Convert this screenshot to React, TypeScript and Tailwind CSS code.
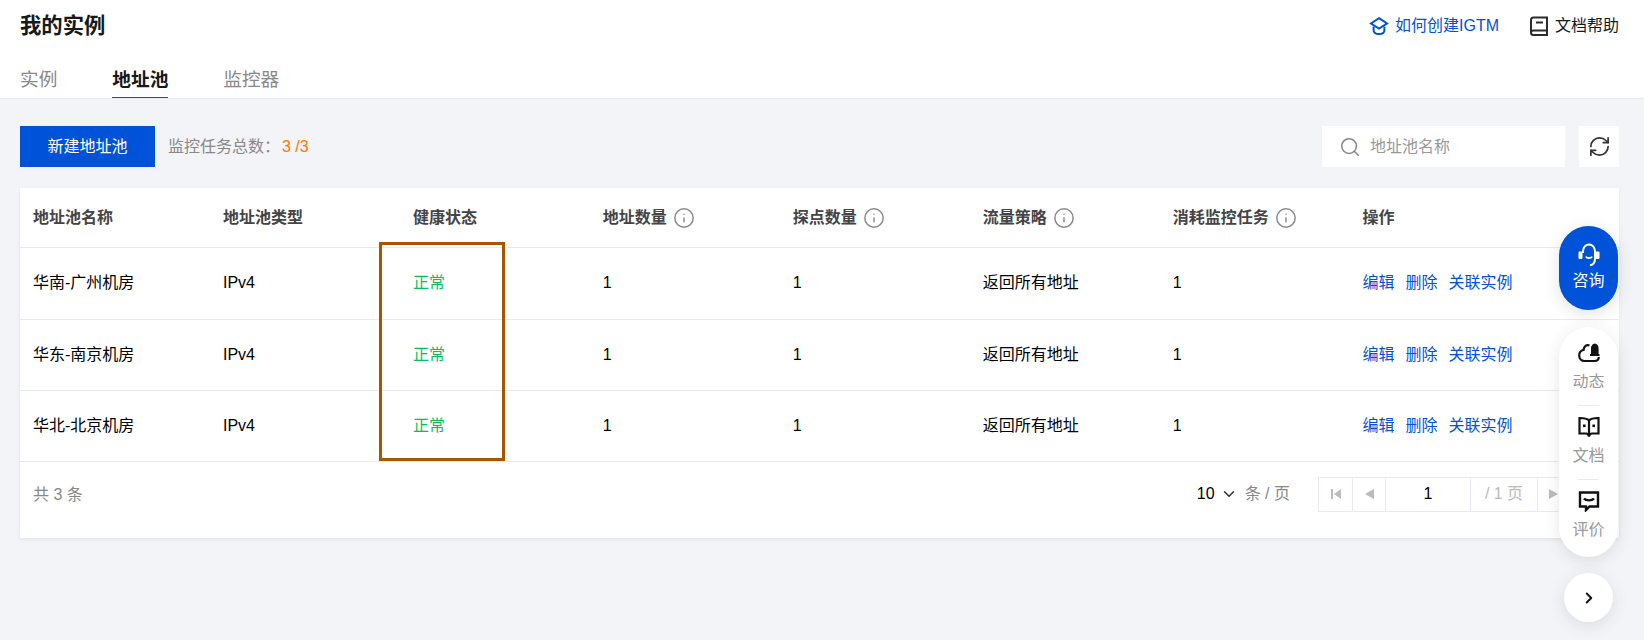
import React from "react";
import { Search, RefreshCw, ChevronDown, ChevronRight, Info } from "lucide-react";

const heads = ["地址池名称", "地址池类型", "健康状态", "地址数量", "探点数量", "流量策略", "消耗监控任务", "操作"];
const withInfo = [3, 4, 5, 6];
const rows = [
  { name: "华南-广州机房", h: "h-[72px]" },
  { name: "华东-南京机房", h: "h-[71px]" },
  { name: "华北-北京机房", h: "h-[71px]" },
];

function CapIcon() {
  return (
    <svg width="20" height="20" viewBox="0 0 20 20" fill="none" stroke="#0052d9" strokeWidth="2">
      <path d="M10 2.2 18 7.5 10 12.6 2 7.5Z" strokeLinejoin="miter" />
      <path d="M4.6 10.5V14.2C4.6 16.8 7 18 10 18S15.4 16.8 15.4 14.2V10.5" />
    </svg>
  );
}
function BookIcon() {
  return (
    <svg width="18" height="20" viewBox="0 0 18 20" fill="none" stroke="#2b2b2b" strokeWidth="2">
      <path d="M17 14.5V1.5H3.5C2 1.5 1 2.5 1 4V16.5C1 18 2 19 3.5 19H17V14.5H3.5C2 14.5 1 15.5 1 16.5" />
      <path d="M6 6.5H13" />
    </svg>
  );
}
function HeadsetIcon() {
  return (
    <svg width="24" height="24" viewBox="0 0 24 24" fill="none" stroke="#fff" strokeWidth="2">
      <path d="M6 10V8.5C6 4.4 8.7 1.5 12 1.5S18 4.4 18 8.5V15.5C18 19.5 16.5 21.7 13 22.2" />
      <rect x="1.5" y="8.5" width="4" height="7.5" rx="1" fill="#fff" stroke="none" />
      <rect x="18.5" y="8.5" width="4" height="7.5" rx="1" fill="#fff" stroke="none" />
      <path d="M9 13.5C9.8 15.6 14.2 15.6 15 13.5" />
    </svg>
  );
}
function CloudIcon() {
  return (
    <svg width="22" height="22" viewBox="0 0 22 22" fill="none" stroke="#111" strokeWidth="2.2">
      <path d="M11.5 3.5C8.5 2 6 4.5 5.5 8C3 8.5 1.2 10.5 1.2 13.5C1.2 16.8 3.5 19 6.5 19H16.5C19 19 20.8 17.5 20.8 15" />
      <path d="M13 12V6.2C13 3.8 14.5 1.5 16.8 1.5S20.6 3.8 20.6 6.2V12H21.5V14H12V12Z" fill="#111" stroke="none" />
    </svg>
  );
}
function OpenBookIcon() {
  return (
    <svg width="22" height="22" viewBox="0 0 22 22" fill="none" stroke="#111" strokeWidth="2.2">
      <path d="M11 4.5C9.5 2.8 7 2 1.5 2V17.5H8C9.5 17.5 10.5 18.5 11 20.5C11.5 18.5 12.5 17.5 14 17.5H20.5V2C15 2 12.5 2.8 11 4.5Z" />
      <path d="M11 4.5V20" />
      <rect x="5" y="8.5" width="2.6" height="2.6" fill="#111" stroke="none" />
      <rect x="14.4" y="8.5" width="2.6" height="2.6" fill="#111" stroke="none" />
    </svg>
  );
}
function ChatIcon() {
  return (
    <svg width="22" height="22" viewBox="0 0 22 22" fill="none" stroke="#111" strokeWidth="2.4">
      <path d="M2 2.5H20V16.5H11.5L8 20V16.5H2Z" />
      <path d="M6 8.5C8 11 14 11 16 8.5" />
    </svg>
  );
}

function PageCell({ w, children, first }: { w: string; children?: React.ReactNode; first?: boolean }) {
  return (
    <div className={`${w} h-full flex items-center justify-center ${first ? "" : "border-l border-[#e7eaef]"}`}>
      {children}
    </div>
  );
}

export default function App() {
  return (
    <div
      className="relative h-[640px] w-[1644px] overflow-hidden bg-[#f3f4f7] text-[16px] text-[#000]"
      style={{ fontFamily: '"Liberation Sans","Noto Sans CJK SC",sans-serif' }}
    >
      <header className="h-[99px] border-b border-[#e7eaef] bg-white px-5 flex flex-col">
        <div className="h-[52px] flex items-center justify-between pr-[5px]">
          <h1 className="pt-[2px] text-[21.33px] font-bold text-[#16181a]">我的实例</h1>
          <div className="flex items-center">
            <CapIcon />
            <span className="ml-[6px] text-[#0052d9]">如何创建IGTM</span>
            <span className="ml-[31px]"><BookIcon /></span>
            <span className="ml-[7px] text-[#16181a]">文档帮助</span>
          </div>
        </div>
        <nav className="flex gap-[55px] h-[46px] text-[18.67px] text-[#888]">
          <span className="h-full flex items-center pt-[10px]">实例</span>
          <span className="h-full flex items-center pt-[10px] font-bold text-[#16181a] border-b border-[#0052d9]">地址池</span>
          <span className="h-full flex items-center pt-[10px]">监控器</span>
        </nav>
      </header>

      <main className="px-5 pt-[27px] pr-[25px]">
        <div className="flex items-center h-[41px]">
          <button className="w-[135px] h-full bg-[#0052d9] text-white">新建地址池</button>
          <span className="ml-[13px] text-[#888]">监控任务总数：<span className="ml-[2px] text-[#ff7800]">3 /3</span></span>
          <div className="ml-auto w-[243px] h-full bg-white flex items-center pl-[17px] text-[#999]">
            <Search size={22} strokeWidth={1.7} className="text-[#888]" />
            <span className="ml-[9px]">地址池名称</span>
          </div>
          <div className="ml-[14px] w-[40px] h-full bg-white flex items-center justify-center">
            <RefreshCw size={23} strokeWidth={1.8} className="text-[#333]" />
          </div>
        </div>

        <section className="mt-[21px] h-[350px] bg-white shadow-[0_2px_4px_rgba(54,58,80,0.08)]">
          <table className="w-full table-fixed border-collapse">
            <colgroup>
              {heads.slice(0, 7).map((h) => <col key={h} className="w-[189.95px]" />)}
              <col />
            </colgroup>
            <thead>
              <tr className="h-[59px] border-b border-[#e7eaef]">
                {heads.map((h, i) => (
                  <th key={h} className="px-[13px] pt-[2px] text-left font-semibold text-[#444]">
                    <span className="flex items-center gap-[6px]">
                      {h}
                      {withInfo.includes(i) && <Info size={22} strokeWidth={1.6} className="text-[#888]" />}
                    </span>
                  </th>
                ))}
              </tr>
            </thead>
            <tbody>
              {rows.map((r) => (
                <tr key={r.name} className={`${r.h} border-b border-[#e7eaef]`}>
                  <td className="px-[13px]">{r.name}</td>
                  <td className="px-[13px]">IPv4</td>
                  <td className="px-[13px] text-[#0abf5b]">正常</td>
                  <td className="px-[13px]">1</td>
                  <td className="px-[13px]">1</td>
                  <td className="px-[13px]">返回所有地址</td>
                  <td className="px-[13px]">1</td>
                  <td className="px-[13px] text-[#0052d9]">
                    <span className="flex gap-[11px]"><a>编辑</a><a>删除</a><a>关联实例</a></span>
                  </td>
                </tr>
              ))}
            </tbody>
          </table>
          <div className="flex items-center justify-between pl-[13px] pr-[14px] pt-[15px]">
            <span className="pt-[1px] text-[#888]">共 3 条</span>
            <div className="flex items-center h-[35px]">
              <span>10</span>
              <ChevronDown size={18} strokeWidth={2} className="ml-[5px] text-[#333]" />
              <span className="ml-[7px] text-[#888]">条 / 页</span>
              <div className="ml-[28px] h-full flex border border-[#e7eaef]">
                <PageCell w="w-[33px]" first>
                  <svg width="12" height="12" viewBox="0 0 12 12" fill="#bbb"><path d="M1 1h2v10H1zM11 1v10L4 6z" /></svg>
                </PageCell>
                <PageCell w="w-[33px]">
                  <svg width="10" height="12" viewBox="0 0 10 12" fill="#bbb"><path d="M10 1v10L1 6z" /></svg>
                </PageCell>
                <PageCell w="w-[85px]">1</PageCell>
                <PageCell w="w-[67px]"><span className="text-[#bbb]">/ 1 页</span></PageCell>
                <PageCell w="w-[33px]">
                  <svg width="10" height="12" viewBox="0 0 10 12" fill="#bbb"><path d="M0 1v10l9-5z" /></svg>
                </PageCell>
                <PageCell w="w-[34px]">
                  <svg width="12" height="12" viewBox="0 0 12 12" fill="#bbb"><path d="M9 1h2v10H9zM1 1v10l7-5z" /></svg>
                </PageCell>
              </div>
            </div>
          </div>
        </section>
      </main>

      {/* 红框标注 */}
      <div className="absolute left-[379px] top-[242px] w-[126px] h-[219px] border-[3px] border-[#a85400]" />

      {/* 悬浮工具栏 */}
      <div className="absolute left-[1559px] top-[226px] w-[59px] flex flex-col items-center">
        <div className="w-full h-[84px] rounded-full bg-[#0052d9] text-white flex flex-col items-center justify-center shadow-[0_4px_16px_rgba(54,58,80,0.14)]">
          <HeadsetIcon />
          <span className="mt-[2px]">咨询</span>
        </div>
        <div className="mt-[17px] w-full h-[230px] rounded-full bg-white flex flex-col items-center pt-[15px] text-[#999] shadow-[0_4px_16px_rgba(54,58,80,0.12)]">
          <CloudIcon />
          <span className="mt-[5px] leading-[26px]">动态</span>
          <span className="my-[10px] w-[21px] h-px bg-[#e7eaef]" />
          <OpenBookIcon />
          <span className="mt-[5px] leading-[26px]">文档</span>
          <span className="my-[10px] w-[21px] h-px bg-[#e7eaef]" />
          <ChatIcon />
          <span className="mt-[5px] leading-[26px]">评价</span>
        </div>
        <div className="mt-[16px] w-[49px] h-[49px] rounded-full bg-white flex items-center justify-center shadow-[0_4px_16px_rgba(54,58,80,0.12)]">
          <ChevronRight size={18} strokeWidth={2.5} className="text-[#111]" />
        </div>
      </div>
    </div>
  );
}
